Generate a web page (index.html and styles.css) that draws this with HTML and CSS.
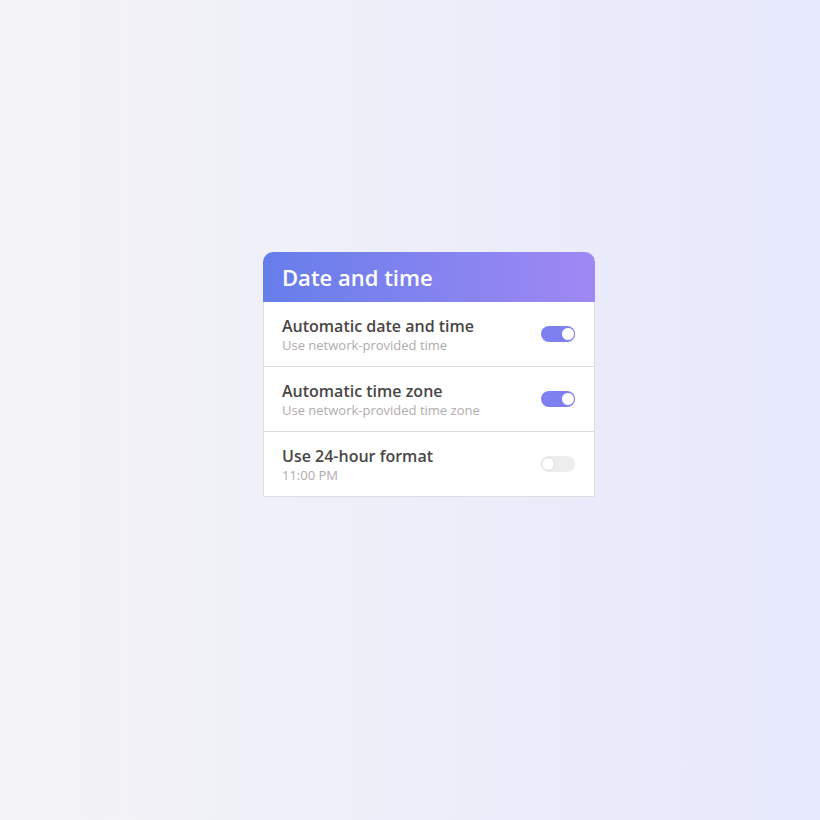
FILE: index.html
```html
<!DOCTYPE html>
<html lang="en">
<head>
    <meta charset="UTF-8">
    <meta name="viewport" content="width=device-width, initial-scale=1.0">
    <title>Date and time</title>
    <link rel="stylesheet" href="styles.css">
</head>
<body>

<div class="card">
    <div class="card-header">Date and time</div>

    <div class="setting">
        <div class="setting-text">
            <div class="setting-title">Automatic date and time</div>
            <div class="setting-sub">Use network-provided time</div>
        </div>
        <span class="switch on"><span class="knob"></span></span>
    </div>

    <div class="setting">
        <div class="setting-text">
            <div class="setting-title">Automatic time zone</div>
            <div class="setting-sub">Use network-provided time zone</div>
        </div>
        <span class="switch on"><span class="knob"></span></span>
    </div>

    <div class="setting">
        <div class="setting-text">
            <div class="setting-title">Use 24-hour format</div>
            <div class="setting-sub">11:00 PM</div>
        </div>
        <span class="switch"><span class="knob"></span></span>
    </div>
</div>

</body>
</html>
```

FILE: styles.css
```css
body {
    font-family: "Open Sans", "Noto Sans", sans-serif;
    background: linear-gradient(90deg, #f4f4f6, #e6e8fc);
    margin: 0;
    padding: 252px 0 0 263px;
    height: 820px;
    box-sizing: border-box;
}
.card {
    width: 332px;
    background-color: #ffffff;
    border-radius: 10px 10px 0 0;
}
.card-header {
    height: 50px;
    padding: 0 18px 0 19px;
    display: flex;
    align-items: center;
    color: #fff;
    font-size: 22px;
    font-weight: 600;
    border-radius: 10px 10px 0 0;
    background: linear-gradient(90deg, #667eea, #9f88f4);
}
.setting {
    height: 65px;
    box-sizing: border-box;
    display: flex;
    align-items: center;
    justify-content: space-between;
    padding: 2px 19px 0 18px;
    border: 1px solid #dddde2;
    border-top: none;
}
.setting-title {
    font-size: 16px;
    font-weight: 600;
    color: #4a4646;
    line-height: 20px;
}
.setting-sub {
    font-size: 13px;
    color: #b0acac;
    line-height: 19px;
}
.switch {
    width: 34px;
    height: 16px;
    border-radius: 8px;
    background-color: #eeeeee;
    display: flex;
    align-items: center;
    margin-bottom: 3px;
}
.switch.on {
    background-color: #7f80f0;
    justify-content: flex-end;
}
.knob {
    width: 12px;
    height: 12px;
    border-radius: 50%;
    background-color: #fff;
    border: 1px solid #dcdcdc;
}
.switch.on .knob {
    border-color: #7f80f0;
}
```
